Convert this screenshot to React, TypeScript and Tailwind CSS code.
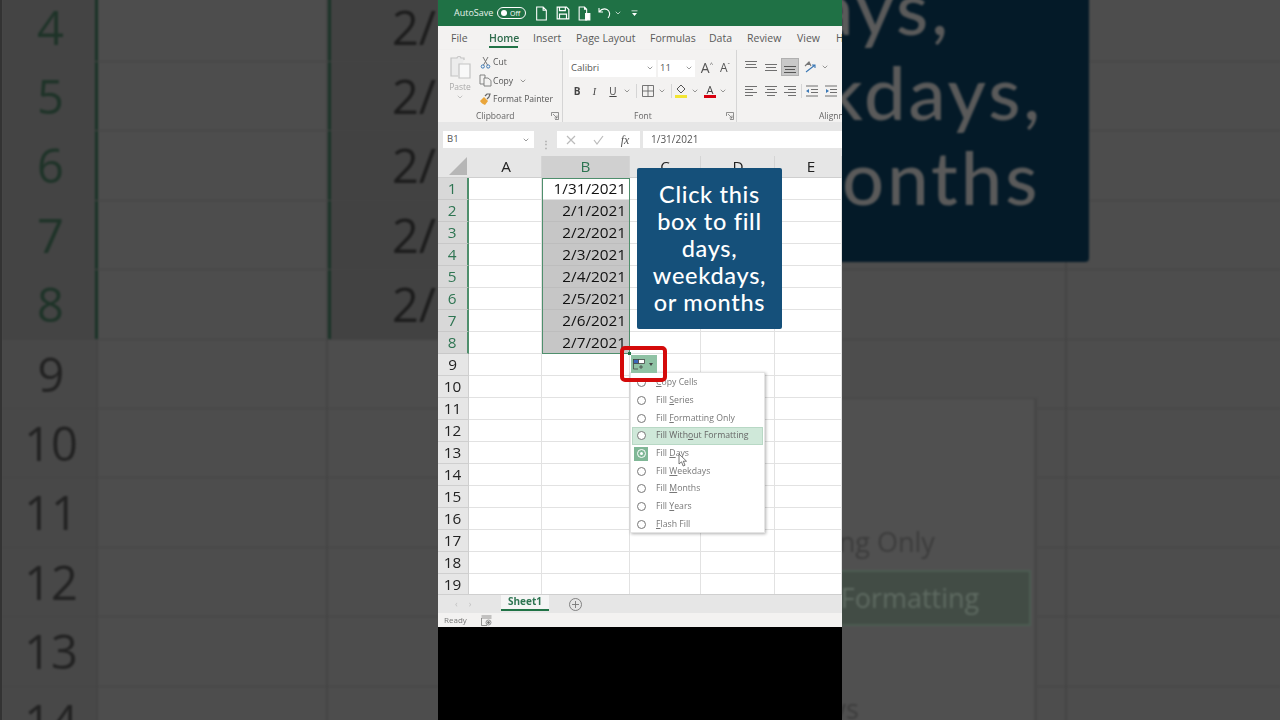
import type { ReactNode } from 'react';
import { ChevronDown } from 'lucide-react';

const TABS = [
  { label: 'File', w: 'w-[38px]' },
  { label: 'Home', w: 'w-[44px]' },
  { label: 'Insert', w: 'w-[43px]' },
  { label: 'Page Layout', w: 'w-[74px]' },
  { label: 'Formulas', w: 'w-[59px]' },
  { label: 'Data', w: 'w-[38px]' },
  { label: 'Review', w: 'w-[50px]' },
  { label: 'View', w: 'w-[39px]' },
  { label: 'Help', w: 'w-[40px]' },
];

const COLS = [
  { label: 'A', w: 'w-[73px]', pad: 'pl-[2px]' },
  { label: 'B', w: 'w-[88px]', pad: '' },
  { label: 'C', w: 'w-[71px]', pad: '' },
  { label: 'D', w: 'w-[74px]', pad: 'pl-px' },
  { label: 'E', w: 'w-[67px]', pad: 'pl-[6px]' },
];

const DATES = ['1/31/2021', '2/1/2021', '2/2/2021', '2/3/2021', '2/4/2021', '2/5/2021', '2/6/2021', '2/7/2021'];
const ROWS = Array.from({ length: 19 }, (_, i) => i + 1);

const MENU = [
  { pre: '', key: 'C', post: 'opy Cells' },
  { pre: 'Fill ', key: 'S', post: 'eries' },
  { pre: 'Fill ', key: 'F', post: 'ormatting Only' },
  { pre: 'Fill With', key: 'o', post: 'ut Formatting' },
  { pre: 'Fill ', key: 'D', post: 'ays' },
  { pre: 'Fill ', key: 'W', post: 'eekdays' },
  { pre: 'Fill ', key: 'M', post: 'onths' },
  { pre: 'Fill ', key: 'Y', post: 'ears' },
  { pre: '', key: 'F', post: 'lash Fill' },
];

const NOTE = ['Click this', 'box to fill', 'days,', 'weekdays,', 'or months'];

function Chevron({ className }: { className?: string }): JSX.Element {
  return <ChevronDown size={8} strokeWidth={2} className={className ?? 'text-[#666]'} />;
}

function Lines({ rows, active }: { rows: [number, number, number][]; active?: boolean }): JSX.Element {
  return (
    <svg width="14" height="14" viewBox="0 0 14 14" stroke={active ? '#555' : '#707070'} strokeWidth="1">
      {rows.map(([y, a, b]) => (
        <line key={y} x1={a} x2={b} y1={y + 0.5} y2={y + 0.5} />
      ))}
    </svg>
  );
}

function Launcher(): JSX.Element {
  return (
    <svg width="8" height="8" viewBox="0 0 8 8" fill="none" stroke="#777" strokeWidth="0.8">
      <path d="M0.5 4V0.5H7.5M7.5 0.5V7.5H4M2 2L6 6M6 3.5V6H3.5" />
    </svg>
  );
}

function Slot({ w, children }: { w: string; children?: ReactNode }): JSX.Element {
  return <div className={`${w} flex shrink-0 items-center justify-center`}>{children}</div>;
}

function TitleBar(): JSX.Element {
  return (
    <div className="flex h-[26px] items-center bg-[#1f7145] pl-4 text-white">
      <span className="w-[43px] text-[9px] text-[#e8f1ec]">AutoSave</span>
      <div className="flex h-[12px] w-[29px] items-center gap-[3px] rounded-full border border-white pl-[3px]">
        <span className="h-[6px] w-[6px] rounded-full bg-white" />
        <span className="text-[7px] leading-none">Off</span>
      </div>
      <Slot w="w-[36px] ml-[-3px]">
        <svg width="13" height="15" viewBox="0 0 12 14" fill="none" stroke="#fff" strokeWidth="1">
          <path d="M1.5 1H7.5L10.5 4V13H1.5ZM7.5 1V4H10.5" />
        </svg>
      </Slot>
      <Slot w="w-[8px]">
        <svg width="14" height="14" viewBox="0 0 12 12" fill="none" stroke="#fff" strokeWidth="1" className="shrink-0">
          <path d="M1 1H9L11 3V11H1ZM3 1V4H8V1M3 11V7H9V11" />
        </svg>
      </Slot>
      <Slot w="w-[34px]">
        <svg width="13" height="15" viewBox="0 0 12 14" fill="none" stroke="#fff" strokeWidth="1">
          <path d="M1 1H6L8 3V13H1ZM6 1V3H8" />
          <path d="M7 7H11V13H7Z" fill="#fff" />
        </svg>
      </Slot>
      <Slot w="w-[8px]">
        <svg width="14" height="13" viewBox="0 0 14 13" fill="none" stroke="#fff" strokeWidth="1.1" className="shrink-0">
          <path d="M1 1V5H5M1 5C3 2.5 6 1 9 2.5C12 4 12.5 8 10 11" />
        </svg>
      </Slot>
      <Slot w="w-[10px] ml-[4px]">
        <Chevron className="text-white" />
      </Slot>
      <Slot w="w-[22px]">
        <svg width="7" height="7" viewBox="0 0 7 7" fill="#fff">
          <path d="M0.5 0.5H6.5V1.2H0.5ZM1 3H6L3.5 6Z" />
        </svg>
      </Slot>
    </div>
  );
}

function Tabs(): JSX.Element {
  return (
    <div className="flex h-[24px] overflow-hidden bg-[#f3f2f1] pl-[13px] text-[10.5px] leading-[24px] text-[#5a5a5a]">
      {TABS.map((t) =>
        t.label === 'Home' ? (
          <div key={t.label} className={`relative ${t.w} shrink-0 font-semibold text-[#2e6b4c]`}>
            Home
            <span className="absolute bottom-[2px] left-0 h-[2px] w-[29px] bg-[#217346]" />
          </div>
        ) : (
          <div key={t.label} className={`${t.w} shrink-0`}>
            {t.label}
          </div>
        ),
      )}
    </div>
  );
}

function ClipboardGroup(): JSX.Element {
  return (
    <div className="flex h-full w-[125px] shrink-0 flex-col border-r border-[#d5d5d5]">
      <div className="flex flex-1">
        <div className="flex w-[40px] flex-col items-center pl-[4px] pt-[5px]">
          <svg width="23" height="24" viewBox="0 0 23 24" fill="none" stroke="#c4c4c4" strokeWidth="1.2">
            <path d="M15 5V3H12C12 1 8 1 8 3H2V21H9" fill="#ececec" />
            <path d="M10 9H21V23H10Z" fill="#f8f8f8" />
          </svg>
          <span className="mt-[2px] text-[8.5px] leading-[12px] text-[#aaa]">Paste</span>
          <Chevron className="text-[#aaa]" />
        </div>
        <div className="flex flex-col pt-[3px] text-[8.6px] leading-[18.5px] text-[#555]">
          <div className="flex items-center">
            <Slot w="w-[15px]">
              <svg width="11" height="13" viewBox="0 0 11 13" fill="none" strokeWidth="1">
                <path d="M3 1L7.5 9M8 1L3.5 9" stroke="#777" />
                <circle cx="2.8" cy="10.5" r="1.6" stroke="#3b78b5" />
                <circle cx="8.2" cy="10.5" r="1.6" stroke="#3b78b5" />
              </svg>
            </Slot>
            <span>Cut</span>
          </div>
          <div className="flex items-center">
            <Slot w="w-[15px]">
              <svg width="13" height="13" viewBox="0 0 13 13" fill="none" stroke="#777" strokeWidth="0.9">
                <path d="M1 1H6V10H1Z" />
                <path d="M5 4H9L12 6.5V12H5Z" fill="#f3f2f1" />
              </svg>
            </Slot>
            <span>Copy</span>
            <Chevron className="ml-[6px] text-[#666]" />
          </div>
          <div className="flex items-center">
            <Slot w="w-[15px]">
              <svg width="13" height="13" viewBox="0 0 13 13" fill="none">
                <path d="M1 8L5 4L9 8L6 12C4 11 2 10 1 8Z" fill="#e9a53a" />
                <path d="M6 3L8 1H11L10 4L8 6" stroke="#666" strokeWidth="1.2" />
              </svg>
            </Slot>
            <span className="whitespace-nowrap">Format Painter</span>
          </div>
        </div>
      </div>
      <div className="flex h-[12px] items-center justify-between pl-[38px] pr-[3px] text-[8.5px] text-[#666]">
        <span>Clipboard</span>
        <Launcher />
      </div>
    </div>
  );
}

function FontGroup(): JSX.Element {
  return (
    <div className="flex h-full w-[174px] shrink-0 flex-col border-r border-[#d5d5d5]">
      <div className="flex-1 pl-[6px] pt-[9.5px]">
        <div className="flex h-[17px] items-center">
          <div className="flex h-[17px] w-[87px] items-center justify-between bg-white pl-[2px] pr-[2px] text-[9.5px] text-[#555]">
            Calibri
            <Chevron />
          </div>
          <div className="ml-[2px] flex h-[17px] w-[37px] items-center justify-between bg-white pl-[2px] pr-[2px] text-[9.5px] text-[#555]">
            11
            <Chevron />
          </div>
          <Slot w="w-[18px] ml-[3px]">
            <span className="text-[14px] leading-none text-[#555]">
              A<span className="align-top text-[6px]">^</span>
            </span>
          </Slot>
          <Slot w="w-[18px]">
            <span className="text-[12px] leading-none text-[#555]">
              A<span className="align-top text-[6px]">ˇ</span>
            </span>
          </Slot>
        </div>
        <div className="mt-[5.5px] flex h-[18px] items-center text-[10px] text-[#444]">
          <Slot w="w-[16px]">
            <span className="font-bold">B</span>
          </Slot>
          <Slot w="w-[19px]">
            <span className="font-['Liberation_Serif',serif] italic">I</span>
          </Slot>
          <Slot w="w-[18px]">
            <span className="underline">U</span>
          </Slot>
          <Slot w="w-[9px]">
            <Chevron />
          </Slot>
          <div className="ml-[5px] mr-[4px] h-[14px] w-px bg-[#d5d5d5]" />
          <Slot w="w-[13px]">
            <svg width="12" height="12" viewBox="0 0 12 12" fill="none" stroke="#666" strokeWidth="0.9">
              <path d="M0.5 0.5H11.5V11.5H0.5ZM6 0.5V11.5M0.5 6H11.5" />
            </svg>
          </Slot>
          <Slot w="w-[15px]">
            <Chevron />
          </Slot>
          <div className="ml-[2px] mr-[2px] h-[14px] w-px bg-[#d5d5d5]" />
          <Slot w="w-[14px]">
            <svg width="13" height="14" viewBox="0 0 13 14" fill="none">
              <path d="M6 1L10 5L6 9L2 5Z" stroke="#555" strokeWidth="1" />
              <rect x="0" y="11" width="12" height="3" fill="#f2e534" />
            </svg>
          </Slot>
          <Slot w="w-[13px]">
            <Chevron />
          </Slot>
          <Slot w="w-[14px] ml-[2px]">
            <span className="relative flex h-[14px] w-[12px] flex-col items-center text-[11px] leading-[11px] text-[#444]">
              A
              <span className="absolute bottom-0 h-[3px] w-[12px] bg-[#d7000f]" />
            </span>
          </Slot>
          <Slot w="w-[12px]">
            <Chevron />
          </Slot>
        </div>
      </div>
      <div className="flex h-[12px] items-center justify-between pl-[71px] pr-[2px] text-[8.5px] text-[#666]">
        <span>Font</span>
        <Launcher />
      </div>
    </div>
  );
}

function AlignmentGroup(): JSX.Element {
  return (
    <div className="flex h-full flex-1 flex-col overflow-hidden">
      <div className="flex-1 pl-[5px] pt-[8px]">
        <div className="flex h-[18px] items-center">
          <Slot w="w-[18px]">
            <Lines rows={[[1, 1, 13], [4, 2, 12], [7, 1, 13]]} />
          </Slot>
          <Slot w="w-[20px] ml-[1px]">
            <Lines rows={[[4, 1, 13], [7, 2, 12], [10, 1, 13]]} />
          </Slot>
          <div className="flex h-[18px] w-[18px] shrink-0 items-center justify-center border border-[#b0b0b0] bg-[#c8c8c8]">
            <Lines active rows={[[6, 1, 13], [9, 2, 12], [12, 1, 13]]} />
          </div>
          <Slot w="w-[22px]">
            <svg width="14" height="14" viewBox="0 0 14 14" fill="none" strokeWidth="1.1">
              <path d="M2 6L6 2L8 6M3 4.5H7" stroke="#777" />
              <path d="M3 12L12 5M9 5H12V8" stroke="#3b78b5" />
            </svg>
          </Slot>
          <Chevron />
        </div>
        <div className="mt-[6px] flex h-[18px] items-center">
          <Slot w="w-[18px]">
            <Lines rows={[[2, 1, 13], [5, 1, 9], [8, 1, 13], [11, 1, 9]]} />
          </Slot>
          <Slot w="w-[20px] ml-[1px]">
            <Lines rows={[[2, 1, 13], [5, 3, 11], [8, 1, 13], [11, 3, 11]]} />
          </Slot>
          <Slot w="w-[18px]">
            <Lines rows={[[2, 1, 13], [5, 5, 13], [8, 1, 13], [11, 5, 13]]} />
          </Slot>
          <div className="ml-[2px] h-[14px] w-px bg-[#d5d5d5]" />
          <Slot w="w-[20px]">
            <svg width="14" height="12" viewBox="0 0 14 12" stroke="#707070" strokeWidth="1" fill="#3b78b5">
              <path d="M1 1H13M6 4.5H13M6 7.5H13M1 11H13" />
              <path d="M1 6L4 4V8Z" stroke="none" />
            </svg>
          </Slot>
          <Slot w="w-[18px]">
            <svg width="14" height="12" viewBox="0 0 14 12" stroke="#707070" strokeWidth="1" fill="#3b78b5">
              <path d="M1 1H13M6 4.5H13M6 7.5H13M1 11H13" />
              <path d="M5 6L2 4V8Z" stroke="none" />
            </svg>
          </Slot>
        </div>
      </div>
      <div className="h-[12px] whitespace-nowrap pl-[82px] text-[8.5px] leading-[12px] text-[#666]">Alignment</div>
    </div>
  );
}

function FormulaBar(): JSX.Element {
  return (
    <div className="flex h-[34px] bg-[#e6e6e6] pl-[5px] pt-[9px]">
      <div className="flex h-[17px] w-[91px] items-center justify-between bg-white pl-1 pr-[4px] text-[9.5px] text-[#555]">
        B1
        <Chevron />
      </div>
      <div className="flex w-[23px] items-center justify-center text-[10px] font-bold leading-none text-[#aaa]">⋮</div>
      <div className="flex h-[17px] w-[83px] items-center bg-white text-[11px] text-[#aaa]">
        <Slot w="w-[27px]">
          <svg width="10" height="10" viewBox="0 0 10 10" stroke="#bbb" strokeWidth="1.2">
            <path d="M1 1L9 9M9 1L1 9" />
          </svg>
        </Slot>
        <Slot w="w-[28px]">
          <svg width="11" height="10" viewBox="0 0 11 10" fill="none" stroke="#bbb" strokeWidth="1.2">
            <path d="M1 5L4 9L10 1" />
          </svg>
        </Slot>
        <Slot w="w-[26px]">
          <span className="font-['Liberation_Serif',serif] text-[12px] italic text-[#555]">fx</span>
        </Slot>
      </div>
      <div className="ml-[3px] flex h-[17px] flex-1 items-center bg-white pl-2 text-[10px] text-[#555]">1/31/2021</div>
    </div>
  );
}

function Sheet(): JSX.Element {
  return (
    <div className="relative h-[438px] overflow-hidden bg-white text-[15.3px]">
      <div className="flex h-[21.7px] border-b border-[#cfcfcf] bg-[#e6e6e6] text-[#222]">
        <div className="flex w-[31px] shrink-0 items-end justify-end pb-[2px] pr-[2px]">
          <svg width="18" height="18" viewBox="0 0 18 18">
            <path d="M18 0V18H0Z" fill="#b6b6b6" />
          </svg>
        </div>
        {COLS.map((c) => (
          <div
            key={c.label}
            className={`${c.w} ${c.pad} shrink-0 border-r border-[#d5d5d5] text-center leading-[21px] ${
              c.label === 'B' ? 'bg-[#d0d0d0] text-[#2e7552]' : ''
            }`}
          >
            {c.label}
          </div>
        ))}
      </div>
      {ROWS.map((r) => {
        const selected = r <= 8;
        return (
          <div key={r} className="flex h-[22px] leading-[20px]">
            <div
              className={`w-[31px] shrink-0 border-b pr-px text-center ${
                selected
                  ? 'border-r-2 border-b-[#c8c8c8] border-r-[#4f8f6d] bg-[#d8d8d8] text-[#2e7552]'
                  : 'border-r border-[#cfcfcf] bg-[#e6e6e6] text-[#222]'
              }`}
            >
              {r}
            </div>
            {COLS.map((c) => (
              <div
                key={c.label}
                className={`${c.w} shrink-0 border-b border-r pr-[3px] text-right text-[#111] ${
                  c.label === 'B' && r > 1 && selected ? 'border-[#bdbdbd] bg-[#c6c6c6]' : 'border-[#e2e2e2]'
                }`}
              >
                {c.label === 'B' && selected ? DATES[r - 1] : ''}
              </div>
            ))}
          </div>
        );
      })}
      <div className="absolute left-[104px] top-[21.7px] h-[176px] w-[88px] border-[1.5px] border-[#4f8f6d]" />
    </div>
  );
}

function Note({ className }: { className: string }): JSX.Element {
  return (
    <div className={`text-center font-['Lato',sans-serif] font-medium ${className}`}>
      {NOTE.map((line) => (
        <div key={line}>{line}</div>
      ))}
    </div>
  );
}

function FillMenu(): JSX.Element {
  return (
    <div className="absolute left-[192px] top-[372px] flex h-[161px] w-[135px] flex-col border border-[#e4e4e4] bg-white px-px pt-[1px] text-[8.7px] text-[#777] shadow-[1px_1px_3px_rgba(0,0,0,0.3)]">
      {MENU.map((m, i) => (
        <div
          key={m.pre + m.post}
          className={`flex h-[17.7px] shrink-0 items-center whitespace-nowrap ${
            i === 3 ? 'border border-[#b8d8c5] bg-[#cfe8d9] text-[#666]' : 'border border-transparent'
          }`}
        >
          <span
            className={`flex h-[14px] w-[14px] shrink-0 items-center justify-center ml-px ${
              i === 4 ? 'bg-[#7fb796]' : ''
            }`}
          >
            <span
              className={`flex h-[9px] w-[9px] items-center justify-center rounded-full border ${
                i === 4 ? 'border-white' : 'border-[#777] bg-white'
              }`}
            >
              {i === 4 && <span className="h-[3px] w-[3px] rounded-full bg-white" />}
            </span>
          </span>
          <span className="ml-[8px]">
            {m.pre}
            <span className="underline">{m.key}</span>
            {m.post}
          </span>
        </div>
      ))}
    </div>
  );
}

function CenterPanel(): JSX.Element {
  return (
    <div className="relative h-[720px] w-[404px] shrink-0 overflow-hidden bg-black font-['Open_Sans',sans-serif]">
      <div className="blur-[0.4px]">
        <TitleBar />
        <Tabs />
        <div className="flex h-[72px] bg-[#f3f2f1] shadow-[0_1px_2px_rgba(0,0,0,0.15)]">
          <ClipboardGroup />
          <FontGroup />
          <AlignmentGroup />
        </div>
        <FormulaBar />
        <Sheet />
        <div className="flex h-[19px] border-t border-[#cfcfcf] bg-[#e6e6e6]">
          <div className="flex w-[63px] items-center gap-[11px] pl-[17px] text-[9px] text-[#c0c0c0]">
            <span>‹</span>
            <span>›</span>
          </div>
          <div className="flex h-[16px] w-[48px] items-center justify-center border-b-2 border-[#217346] bg-[#f5f5f5] pb-px text-[10px] font-bold text-[#2e7552]">
            Sheet1
          </div>
          <Slot w="w-[52px]">
            <svg width="13" height="13" viewBox="0 0 13 13" fill="none" stroke="#777" strokeWidth="0.9">
              <circle cx="6.5" cy="6.5" r="6" />
              <path d="M6.5 3V10M3 6.5H10" />
            </svg>
          </Slot>
        </div>
        <div className="flex h-[14px] items-center bg-[#f3f2f1] pl-[6px] text-[8px] text-[#777]">
          <span className="w-[37px]">Ready</span>
          <svg width="11" height="11" viewBox="0 0 11 11" fill="none" stroke="#777" strokeWidth="0.8">
            <path d="M0.5 1H10.5M0.5 3H10.5M0.5 3V10.5H6" />
            <circle cx="7.5" cy="7.5" r="2.5" />
            <circle cx="7.5" cy="7.5" r="1" fill="#777" />
          </svg>
        </div>
        <Note className="absolute left-[199px] top-[168px] h-[161px] w-[145px] rounded-[2px] bg-[#15507a] pt-[13px] text-[23.5px] leading-[27px] tracking-[0.03em] text-white" />
        <FillMenu />
        <div className="absolute left-[182px] top-[346px] flex h-[36px] w-[47px] items-center justify-center rounded-[5px] border-[4px] border-[#d40a0a]">
          <div className="flex h-[18px] w-[26px] items-center gap-[4px] bg-[#8fc2a4] pl-[2px]">
            <svg width="12" height="11" viewBox="0 0 12 11" fill="none" stroke="#444" strokeWidth="0.8">
              <rect x="0.5" y="0.5" width="5" height="4" fill="#3a66b8" />
              <rect x="5.5" y="0.5" width="6" height="4" fill="#fff" />
              <path d="M0.5 4.5V10H5M8 6V10M6 8H10" />
            </svg>
            <span className="h-0 w-0 border-x-[2.5px] border-t-[3px] border-x-transparent border-t-[#444]" />
          </div>
        </div>
        <span className="absolute left-[190px] top-[352px] h-[3px] w-[3px] bg-[#217346]" />
        <svg
          className="absolute left-[240px] top-[453px]"
          width="10"
          height="14"
          viewBox="0 0 10 14"
          fill="#fff"
          stroke="#555"
          strokeWidth="0.8"
        >
          <path d="M1 1V11L3.5 8.8L5.2 13L7 12.2L5.3 8.2H8.5Z" />
        </svg>
      </div>
    </div>
  );
}

// the blurred, darkened zoom of the same sheet on either side of the video
function LeftPanel(): JSX.Element {
  const rows = [4, 5, 6, 7, 8, 9, 10, 11, 12, 13, 14];
  return (
    <div className="h-[720px] w-[438px] shrink-0 overflow-hidden border-l-2 border-[#333] bg-[#4d4d4d] font-['Open_Sans',sans-serif]">
      <div className="mt-[-7.4px] blur-[1px]">
        {rows.map((r) => {
          const selected = r <= 8;
          return (
            <div key={r} className="flex h-[69.4px] border-b border-[#444]">
              <div
                className={`w-[96px] shrink-0 pl-[4px] text-center text-[47px] leading-[69px] ${
                  selected ? 'border-r-[3px] border-[#1a3327] bg-[#444] text-[#1e3328]' : 'border-r-2 border-[#444] bg-[#484848] text-[#222]'
                }`}
              >
                {r}
              </div>
              <div className="w-[230px] shrink-0 border-r-2 border-[#444]" />
              <div
                className={`flex-1 pl-[61px] text-[47px] leading-[69px] text-[#1c1c1c] ${
                  selected ? 'border-l-[3px] border-[#1a3327] bg-[#424242]' : ''
                }`}
              >
                {selected ? '2/' : ''}
              </div>
            </div>
          );
        })}
      </div>
    </div>
  );
}

function RightPanel(): JSX.Element {
  const rows = [4, 5, 6, 7, 8, 9, 10, 11, 12, 13, 14];
  return (
    <div className="h-[720px] w-[438px] shrink-0 overflow-hidden bg-[#4d4d4d] font-['Open_Sans',sans-serif]">
      <div className="relative flex h-[720px] flex-col blur-[1px]">
        <div className="mt-[-7.4px]">
          {rows.map((r) => (
            <div key={r} className="flex h-[69.4px] border-b border-[#444]">
              <div className="w-[225px] shrink-0 border-r-2 border-[#444]" />
            </div>
          ))}
        </div>
        <Note className="absolute left-[-208px] top-[-245px] h-[507px] w-[455px] rounded-[4px] bg-[#041a28] pt-[39px] text-[74px] leading-[85px] tracking-[0.04em] text-[#5a5a5a]" />
        <div className="absolute left-[-230px] top-[398px] h-[400px] w-[425px] border-r-[3px] border-t border-[#474747] bg-[#505050] pt-[4px] text-[27px] text-[#3c3c3c]">
          {MENU.map((m, i) => (
            <div
              key={m.pre + m.post}
              className={`flex h-[55.7px] items-center whitespace-nowrap pl-[78px] ${
                i === 3 ? 'mr-[3px] border-2 border-[#4c5c52] bg-[#424c45] text-[#5f6b62]' : ''
              }`}
            >
              {m.pre}
              {m.key}
              {m.post}
            </div>
          ))}
        </div>
      </div>
    </div>
  );
}

export default function App(): JSX.Element {
  return (
    <div className="flex h-[720px] w-[1280px] overflow-hidden bg-black">
      <LeftPanel />
      <CenterPanel />
      <RightPanel />
    </div>
  );
}
